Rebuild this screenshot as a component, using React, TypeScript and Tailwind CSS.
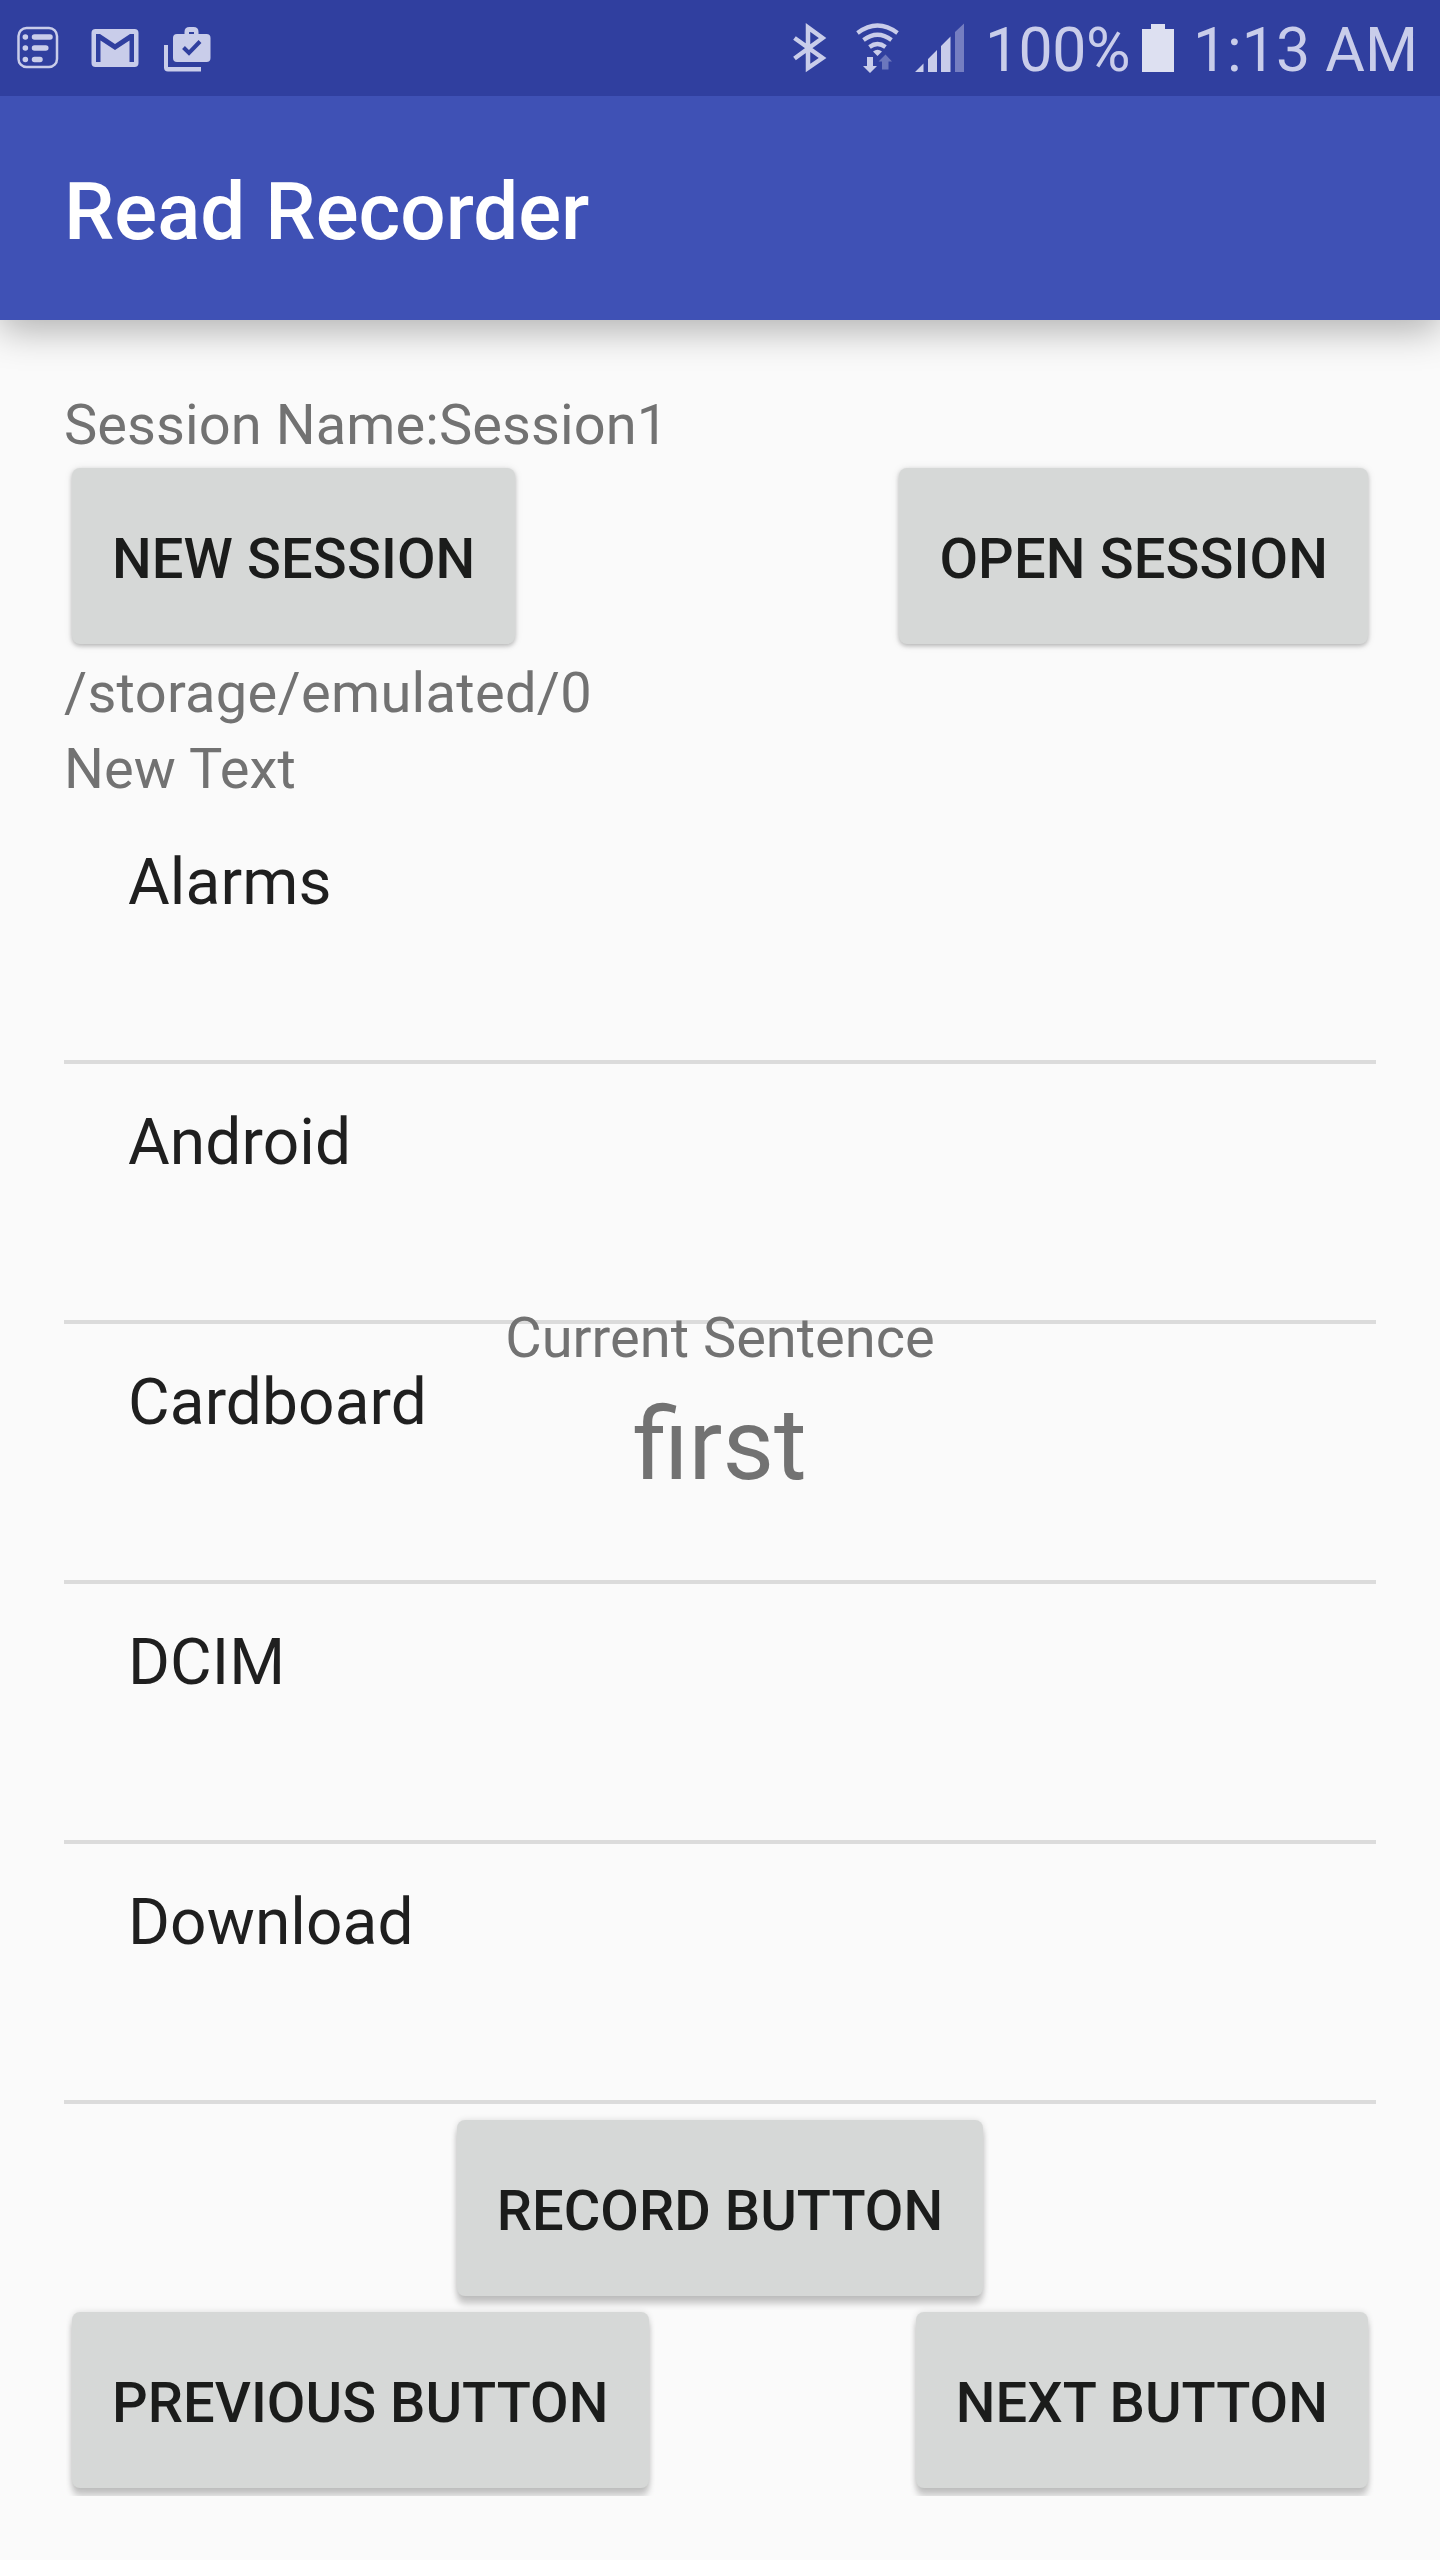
import React from 'react';

interface RaisedButtonProps {
  label: string;
  elevated?: boolean;
}

const FOLDERS = ['Alarms', 'Android', 'Cardboard', 'DCIM', 'Download'];

const RaisedButton: React.FC<RaisedButtonProps> = ({ label, elevated }) => (
  <button
    className={`h-44 px-10 pt-1.5 rounded-lg bg-[#d6d8d7] text-[#1b1c1b] text-[56px] leading-none font-medium whitespace-nowrap ${
      elevated
        ? 'tracking-[0.04px] shadow-[0_8px_6px_rgba(0,0,0,0.2),0_0_6px_rgba(0,0,0,0.12)]'
        : 'tracking-[0.12px] shadow-[0_2px_4px_rgba(0,0,0,0.22),0_1px_8px_rgba(0,0,0,0.1)]'
    }`}
  >
    {label}
  </button>
);

const StatusBar: React.FC = () => (
  <div className="relative z-10 h-24 bg-[#303f9f] text-[#c9cdea] flex items-center justify-between">
    {/* Notifications */}
    <svg width="240" height="96" viewBox="0 0 240 96" fill="currentColor">
      <rect x="18.5" y="28" width="38.5" height="39" rx="8" fill="none" stroke="currentColor" strokeWidth="2.5" />
      <g stroke="currentColor" strokeWidth="5.5" strokeLinecap="round">
        <path d="M25.3 37h.1M25.3 48h.1M25.3 59.5h.1M34.5 37H50M34.5 48h11.3M34.5 59.5H40" />
      </g>
      <rect x="91.5" y="29" width="47" height="38" rx="4" />
      <path d="M96 62V34h4L115 44L130 34h4v28h-4.500V40.500L115 50L100.500 40.500V62z" fill="#303f9f" />
      <path d="M164 45h4v22h33v4.500h-33q-4 0-4-4z" />
      <path d="M177 34h7.500v-2q0-5 5-5h4q5 0 5 5v2h8q4 0 4 4v20q0 4-4 4h-29.500q-4 0-4-4V38q0-4 4-4zM189 34h5v-2h-5z" fillRule="evenodd" />
      <path d="M183.500 47.500l5.500 5.500l11-11.500" fill="none" stroke="#303f9f" strokeWidth="4" />
    </svg>

    {/* System state */}
    <div className="flex items-center pr-[22px] text-[60.8px] leading-none">
      <svg width="200" height="96" viewBox="780 0 200 96" fill="currentColor" className="mr-[5px]">
        <path d="M794.5 38l28 20l-14.500 10V27.500l14.500 10.500l-28 20.500" fill="none" stroke="currentColor" strokeWidth="4.5" />
        <g fill="none" stroke="currentColor" strokeWidth="4.2">
          <path d="M857.5 33q20-15 40 0M863.5 40q14-10.500 28 0M869.500 47q8-6 16 0" />
        </g>
        <path d="M873 51.5q4.500-3.500 9 0l-4.500 4.500z" />
        <path d="M867 57h6v9h4l-7 7l-7-7h4z" />
        <path d="M882 69.5h6.500V61.500h3.500l-6.500-7l-7 7h3.500z" opacity=".4" />
        <path d="M915 72l8.500-8.500V72zM928 59l9-9v22h-9zM941 46l9.500-9.500V72H941z" />
        <path d="M955 32l9-8.500V72h-9z" opacity=".45" />
      </svg>
      <span className="pt-1.5 tracking-[-0.5px]">100%</span>
      <svg width="32" height="48" viewBox="0 0 32 48" className="ml-3 mr-[19px]">
        <path d="M0 5h9V0h14v5h9v43H0z" fill="#dde0f1" />
      </svg>
      <span className="pt-1.5">1:13 AM</span>
    </div>
  </div>
);

const App: React.FC = () => {
  return (
    <div className="w-[1440px] h-[2560px] flex flex-col overflow-hidden bg-[#fafafa] font-['Roboto',sans-serif] text-[56px] leading-[82px] text-[#727272]">
      <StatusBar />

      <header className="h-56 px-16 pt-2 flex items-center bg-[#3f51b5] text-white text-[80px] font-medium shadow-[0_10px_36px_rgba(0,0,0,0.3)]">
        Read Recorder
      </header>

      {/* Bottom shadows are cut at the edge of the content */}
      <main className="relative mt-2 pt-14 px-16 h-[2168px] overflow-hidden">
        <p className="h-[76px] tracking-[0.08px] whitespace-nowrap">Session Name:Session1</p>
        <div className="flex justify-between p-2">
          <RaisedButton label="NEW SESSION" />
          <RaisedButton label="OPEN SESSION" />
        </div>
        <p className="h-[76px] tracking-[0.3px]">/storage/emulated/0</p>
        <p className="h-[76px] tracking-[0.1px]">New Text</p>

        <ul className="text-[64px] leading-[76px] tracking-[0.1px] text-[#1f1f1f]">
          {FOLDERS.map((name) => (
            <li key={name} className="h-[260px] px-16 pt-[41px] border-b-4 border-[#dbdbdb]">
              {name}
            </li>
          ))}
        </ul>

        <div className="flex justify-center pt-4 pb-2">
          <RaisedButton label="RECORD BUTTON" elevated />
        </div>
        <div className="flex justify-between p-2">
          <RaisedButton label="PREVIOUS BUTTON" elevated />
          <RaisedButton label="NEXT BUTTON" elevated />
        </div>

        {/* Current sentence floats over the folder list */}
        <div className="absolute inset-x-0 top-[969px] text-center">
          <p className="h-[76px]">Current Sentence</p>
          <p className="text-[100px] leading-[144px]">first</p>
        </div>
      </main>
    </div>
  );
};

export default App;
